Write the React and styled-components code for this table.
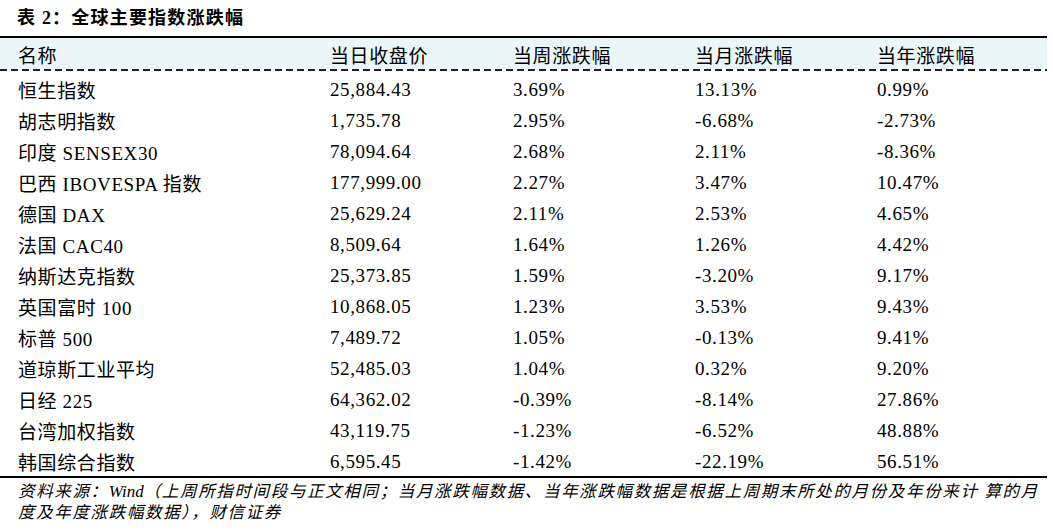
import React from 'react';
import styled, { createGlobalStyle } from 'styled-components';

const GlobalStyle = createGlobalStyle`
  body {
    margin: 0;
    background: #ffffff;
    color: #000000;
    font-family: "Liberation Serif", "Noto Sans CJK SC", serif;
  }
`

const Page = styled.div`
  width: 1053px;
  height: 530px;
  overflow: hidden;
  padding-top: 7px;
  box-sizing: border-box;
`
const Title = styled.h2`
  margin: 0 0 0 17px;
  height: 29px;
  line-height: 22px;
  font-size: 18px;
  font-weight: 700;
  letter-spacing: 1.2px;
  font-family: "Liberation Serif", "Noto Sans CJK SC", serif;
`
const Table = styled.div`
  width: 1047px;
  border-top: 2px solid #000;
  border-bottom: 2px solid #000;
`
const Row = styled.div`
  display: grid;
  grid-template-columns: 330px 183px 182px 182px 1fr;
  align-items: center;
  height: ${props => props.h || 31}px;
  background: ${props => props.head ? '#eaf6f7' : 'transparent'};
  font-size: 19px;
  letter-spacing: 0.6px;
`
const Cell = styled.div`
  padding-left: ${props => props.first ? '18px' : '0'};
  white-space: nowrap;
  padding-top: 2px;
`
const DashRule = styled.div`
  height: 2px;
  margin: 0 0 2px 0;
  background: repeating-linear-gradient(to right, #222 0 7px, transparent 7px 11px);
`
const Footnote = styled.p`
  margin: 3px 0 0 18px;
  font-size: 16.5px;
  line-height: 21px;
  font-style: italic;
  letter-spacing: 1.65px;
  white-space: nowrap;
`
const Latin = styled.span`
  font-family: "Liberation Serif", serif;
  font-size: 17px;
  letter-spacing: 0;
`

const headers = ['名称', '当日收盘价', '当周涨跌幅', '当月涨跌幅', '当年涨跌幅'];

const rows = [
  ['恒生指数', '25,884.43', '3.69%', '13.13%', '0.99%'],
  ['胡志明指数', '1,735.78', '2.95%', '-6.68%', '-2.73%'],
  ['印度 SENSEX30', '78,094.64', '2.68%', '2.11%', '-8.36%'],
  ['巴西 IBOVESPA 指数', '177,999.00', '2.27%', '3.47%', '10.47%'],
  ['德国 DAX', '25,629.24', '2.11%', '2.53%', '4.65%'],
  ['法国 CAC40', '8,509.64', '1.64%', '1.26%', '4.42%'],
  ['纳斯达克指数', '25,373.85', '1.59%', '-3.20%', '9.17%'],
  ['英国富时 100', '10,868.05', '1.23%', '3.53%', '9.43%'],
  ['标普 500', '7,489.72', '1.05%', '-0.13%', '9.41%'],
  ['道琼斯工业平均', '52,485.03', '1.04%', '0.32%', '9.20%'],
  ['日经 225', '64,362.02', '-0.39%', '-8.14%', '27.86%'],
  ['台湾加权指数', '43,119.75', '-1.23%', '-6.52%', '48.88%'],
  ['韩国综合指数', '6,595.45', '-1.42%', '-22.19%', '56.51%'],
];

export default function App() {
  return (
    <Page>
      <GlobalStyle />
      <Title>表 2：全球主要指数涨跌幅</Title>
      <Table>
        <Row head h={31}>
          {headers.map((h, i) => (
            <Cell key={h} first={i === 0}>{h}</Cell>
          ))}
        </Row>
        <DashRule />
        {rows.map(r => (
          <Row key={r[0]}>
            {r.map((v, i) => (
              <Cell key={i} first={i === 0}>{v}</Cell>
            ))}
          </Row>
        ))}
      </Table>
      <Footnote>
        资料来源：<Latin>Wind</Latin>（上周所指时间段与正文相同；当月涨跌幅数据、当年涨跌幅数据是根据上周期末所处的月份及年份来计 算的月
        <br />
        度及年度涨跌幅数据），财信证券
      </Footnote>
    </Page>
  );
}
